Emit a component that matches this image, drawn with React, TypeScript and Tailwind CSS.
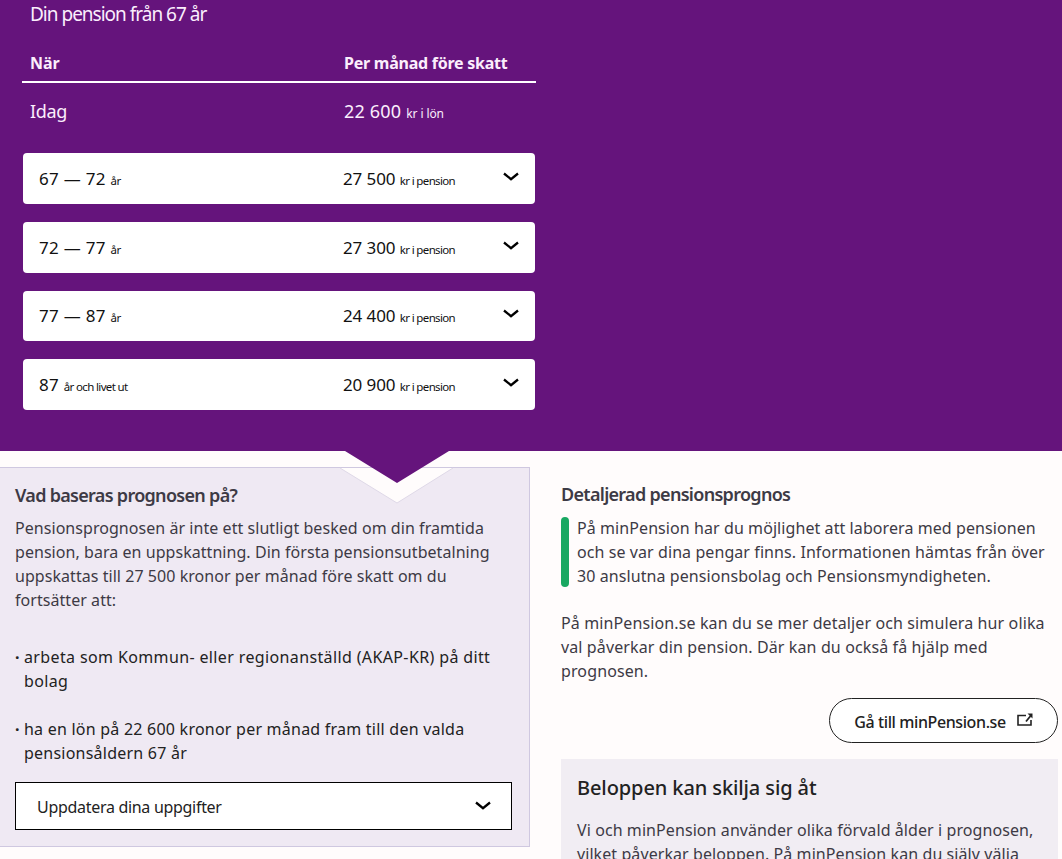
const rows = [
  { from: '67 — 72', unit: 'år', amount: '27 500' },
  { from: '72 — 77', unit: 'år', amount: '27 300' },
  { from: '77 — 87', unit: 'år', amount: '24 400' },
  { from: '87', unit: 'år och livet ut', amount: '20 900' },
];

function Chevron({ className }: { className: string }) {
  return (
    <svg width="16" height="9" viewBox="0 0 16 9" fill="none" className={className}>
      <path d="M1 1.5 L8 7.2 L15 1.5" stroke="#000" strokeWidth="2.3" />
    </svg>
  );
}

export default function App() {
  return (
    <div className="h-[859px] overflow-hidden bg-[#fffcfc] text-[16px] leading-6 text-[#3d3a45] font-['Noto_Sans',sans-serif]">
      <section className="h-[451px] bg-[#65147c] text-[#fbeefc]">
        <h1 className="pl-[30px] pt-[2px] text-[19px] leading-6 tracking-[-1px]">Din pension från 67 år</h1>
        <div className="ml-[22px] mt-[22px] w-[514px]">
          <div className="flex h-[35px] items-end border-b-2 border-white pb-[6px] pl-2 font-bold">
            <span className="w-[314px]">När</span>
            <span className="tracking-[-0.25px]">Per månad före skatt</span>
          </div>
          <div className="flex h-[70.33px] items-start pl-2 pt-[16px] text-[18px]">
            <span className="w-[314px] tracking-[-0.3px]">Idag</span>
            <span className="tracking-[0.2px]">22 600 <span className="text-[12px] tracking-[-0.1px]">kr i lön</span></span>
          </div>
          <div className="flex flex-col gap-[18px]">
            {rows.map((r) => (
              <div key={r.from} className="mx-px flex h-[50.67px] items-center rounded bg-white pl-4 pr-4 pt-[3px] text-[#111]">
                <span className="w-[304px] text-[17px] tracking-[0.3px]">
                  {r.from} <span className="text-[11.5px] tracking-[-0.65px]">{r.unit}</span>
                </span>
                <span className="flex-1 text-[17px] tracking-[-0.1px]">
                  {r.amount} <span className="text-[11.5px] tracking-[-0.65px]">kr i pension</span>
                </span>
                <Chevron className="mb-[7px] shrink-0" />
              </div>
            ))}
          </div>
        </div>
      </section>

      <div className="flex pt-4">
        <section className="relative h-[380px] w-[530px] shrink-0 border border-l-0 border-[#cfc8e0] bg-[#efe9f3] pl-[15px] pr-4">
          <svg width="130" height="60" viewBox="0 0 130 60" className="absolute left-[330px] top-[-17px]">
            <path d="M10 17 L67 52 L123 17 Z" fill="#fffcfc" />
            <path d="M10 17 L67 52 L123 17" fill="none" stroke="#dfd9e8" />
            <path d="M15 0 L67 32 L119 0 Z" fill="#65147c" />
          </svg>
          <h2 className="pt-[15px] text-[18px] font-semibold leading-6 tracking-[-0.7px]">Vad baseras prognosen på?</h2>
          <p className="mt-[9px] w-[490px] tracking-[0.05px]">
            Pensionsprognosen är inte ett slutligt besked om din framtida pension, bara en uppskattning. Din första pensionsutbetalning uppskattas till 27 500 kronor per månad före skatt om du fortsätter att:
          </p>
          <ul className="mt-[33px] flex flex-col gap-6 text-[#222]">
            <li className="relative w-[480px] pl-[9px] tracking-[0.37px]">
              <span className="absolute left-0 top-0 font-bold">·</span>
              arbeta som Kommun- eller regionanställd (AKAP-KR) på ditt bolag
            </li>
            <li className="relative w-[480px] pl-[9px] tracking-[0.23px]">
              <span className="absolute left-0 top-0 font-bold">·</span>
              ha en lön på 22 600 kronor per månad fram till den valda pensionsåldern 67 år
            </li>
          </ul>
          <button className="mt-[17px] flex h-[48px] w-[497px] items-center justify-between border border-black bg-white pl-[21px] pr-[20px] pt-[2px] tracking-[-0.3px] text-[#222]">
            Uppdatera dina uppgifter
            <Chevron className="mb-[3px] shrink-0" />
          </button>
        </section>

        <section className="ml-[31px] flex-1 pr-1">
          <h2 className="pt-[15px] text-[18px] font-semibold leading-6 tracking-[-0.7px]">Detaljerad pensionsprognos</h2>
          <div className="mt-[11px] flex h-[70px] gap-2">
            <span className="w-2 shrink-0 rounded-sm bg-[#19a862]" />
            <p className="mt-[-1px] tracking-[0.08px]">På minPension har du möjlighet att laborera med pensionen och se var dina pengar finns. Informationen hämtas från över 30 anslutna pensionsbolag och Pensionsmyndigheten.</p>
          </div>
          <p className="mt-6 tracking-[0.12px]">På minPension.se kan du se mer detaljer och simulera hur olika val påverkar din pension. Där kan du också få hjälp med prognosen.</p>
          <div className="mt-[15px] flex justify-end">
            <a className="flex h-[45px] w-[229px] items-center justify-center gap-[10px] rounded-full border border-[#222] bg-white pt-[2px] font-medium tracking-[-0.4px] text-[#222]">
              Gå till minPension.se
              <svg width="17" height="14" viewBox="0 0 17 14" fill="none" className="mb-[3px]">
                <path d="M10 2.5 H2 V12 H15 V7" stroke="#222" strokeWidth="1.6" />
                <path d="M10 8.5 L14.5 3" stroke="#222" strokeWidth="1.8" />
                <path d="M11.5 0.5 H16.5 V5.5 Z" fill="#222" />
              </svg>
            </a>
          </div>
          <div className="mt-4 bg-[#f1edf3] px-4 pt-[17px]">
            <h3 className="text-[20px] font-medium leading-6 tracking-[-0.1px] text-[#222]">Beloppen kan skilja sig åt</h3>
            <p className="mt-[18px] tracking-[0.08px]">Vi och minPension använder olika förvald ålder i prognosen, vilket påverkar beloppen. På minPension kan du själv välja</p>
          </div>
        </section>
      </div>
    </div>
  );
}
